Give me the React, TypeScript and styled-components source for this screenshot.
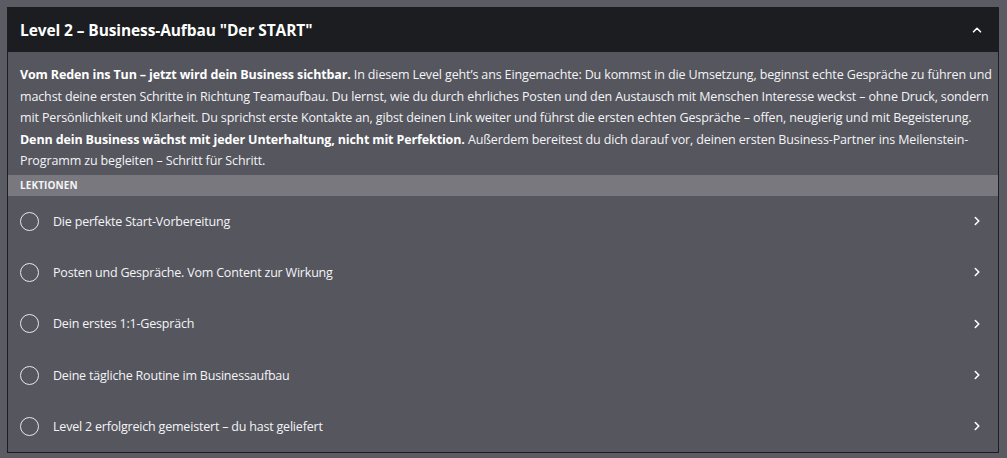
import React, { FunctionComponent } from "react"
import styled, { createGlobalStyle } from "styled-components"

const GlobalStyle = createGlobalStyle`
  html, body {
    margin: 0;
    padding: 0;
    background: #5b5b63;
  }
  body {
    font-family: "Open Sans", "Noto Sans", sans-serif;
    color: #f2f2f4;
  }
`

const Page = styled.div`
  padding: 7px 8px 6px 7px;
`

const Card = styled.section`
  border: 1px solid #1b1d20;
  background: #55565e;
`

const Header = styled.button`
  display: flex;
  align-items: center;
  justify-content: space-between;
  width: 100%;
  height: 44px;
  padding: 0 16px 0 12px;
  border: 0;
  background: #1b1d20;
  color: #ffffff;
  font-family: inherit;
  cursor: pointer;
`

const Title = styled.h2`
  margin: 0;
  font-size: 15.5px;
  font-weight: 700;
  letter-spacing: -0.1px;
`

const Description = styled.p`
  margin: 0;
  padding: 12px 12px 3px 12px;
  font-size: 12.5px;
  line-height: 21.5px;
  letter-spacing: -0.13px;
  color: #f4f4f6;
  white-space: nowrap;

  strong {
    font-weight: 700;
    color: #ffffff;
  }
`

const SectionLabel = styled.div`
  display: flex;
  align-items: center;
  height: 21px;
  padding: 0 12px;
  background: #78787e;
  color: #f4f4f6;
  font-size: 10px;
  font-weight: 700;
  letter-spacing: 0.1px;
`

const LessonList = styled.ul`
  margin: 0;
  padding: 0;
  list-style: none;
`

const LessonRow = styled.li`
  display: flex;
  align-items: center;
  height: 51.3px;
  padding: 0 16px 0 12px;
  cursor: pointer;
`

const Circle = styled.span`
  flex: none;
  width: 17px;
  height: 17px;
  border: 1.5px solid #e8e8ec;
  border-radius: 50%;
  margin-right: 14px;
`

const LessonTitle = styled.span`
  flex: 1;
  font-size: 12.5px;
  letter-spacing: -0.2px;
  color: #f4f4f6;
`

const Chevron: FunctionComponent<{ up?: boolean }> = ({ up }) => (
  <svg width="10" height="10" viewBox="0 0 10 10" fill="none">
    <path
      d={up ? "M1.5 6.8 L5 3.3 L8.5 6.8" : "M3.3 1.5 L6.8 5 L3.3 8.5"}
      stroke="#ffffff"
      strokeWidth="1.6"
      strokeLinecap="round"
      strokeLinejoin="round"
    />
  </svg>
)

const lessons = [
  "Die perfekte Start-Vorbereitung",
  "Posten und Gespräche. Vom Content zur Wirkung",
  "Dein erstes 1:1-Gespräch",
  "Deine tägliche Routine im Businessaufbau",
  "Level 2 erfolgreich gemeistert – du hast geliefert",
]

export default function App() {
  return (
    <>
      <GlobalStyle />
      <Page>
        <Card>
          <Header>
            <Title>Level 2 – Business-Aufbau "Der START"</Title>
            <Chevron up />
          </Header>
          {/* line breaks follow the original layout */}
          <Description>
            <strong>Vom Reden ins Tun – jetzt wird dein Business sichtbar.</strong>{" "}
            In diesem Level geht’s ans Eingemachte: Du kommst in die Umsetzung,
            beginnst echte Gespräche zu führen und
            <br />
            machst deine ersten Schritte in Richtung Teamaufbau. Du lernst, wie du
            durch ehrliches Posten und den Austausch mit Menschen Interesse weckst
            – ohne Druck, sondern
            <br />
            mit Persönlichkeit und Klarheit. Du sprichst erste Kontakte an, gibst
            deinen Link weiter und führst die ersten echten Gespräche – offen,
            neugierig und mit Begeisterung.
            <br />
            <strong>
              Denn dein Business wächst mit jeder Unterhaltung, nicht mit
              Perfektion.
            </strong>{" "}
            Außerdem bereitest du dich darauf vor, deinen ersten Business-Partner
            ins Meilenstein-
            <br />
            Programm zu begleiten – Schritt für Schritt.
          </Description>
          <SectionLabel>LEKTIONEN</SectionLabel>
          <LessonList>
            {lessons.map((lesson) => (
              <LessonRow key={lesson}>
                <Circle />
                <LessonTitle>{lesson}</LessonTitle>
                <Chevron />
              </LessonRow>
            ))}
          </LessonList>
        </Card>
      </Page>
    </>
  )
}
